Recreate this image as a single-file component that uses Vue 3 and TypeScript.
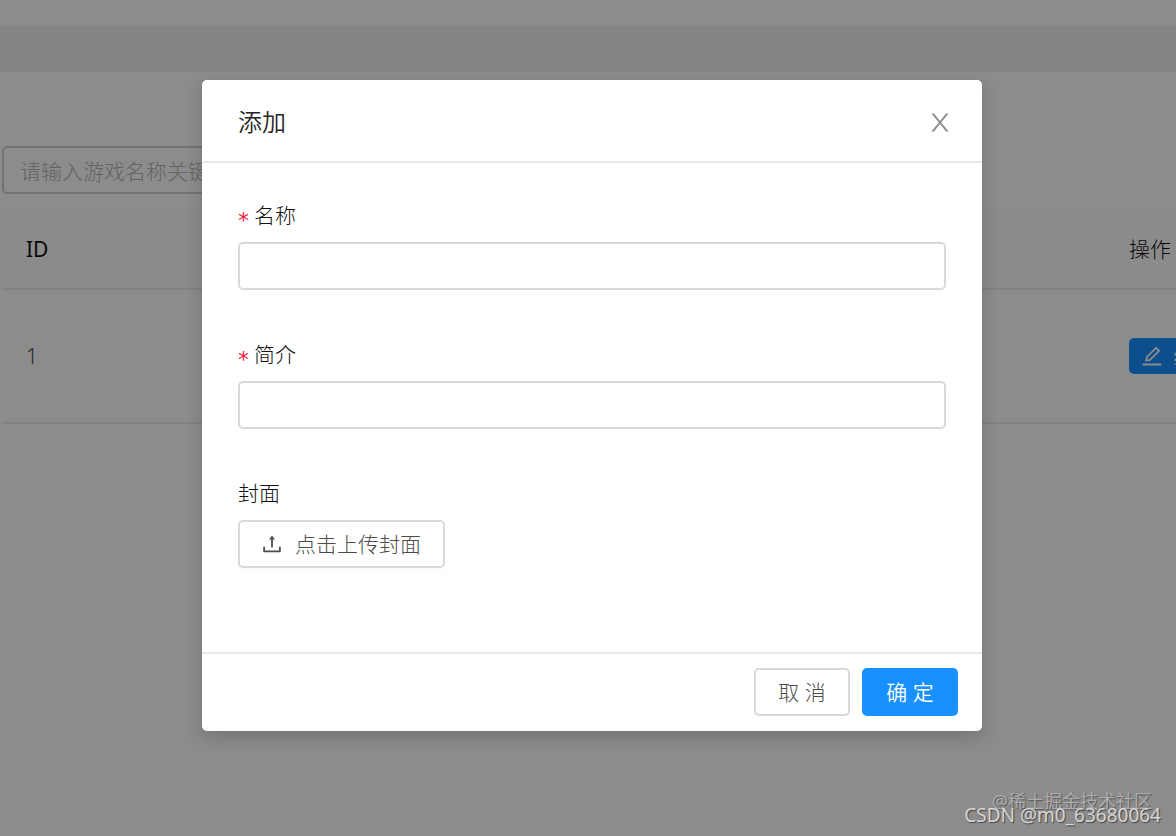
<script setup lang="ts">
import { ref } from 'vue'

interface Row {
  id: number
}

const keyword = ref('')
const name = ref('')
const intro = ref('')
const rows: Row[] = [{ id: 1 }]
</script>

<template>
  <div class="page">
    <div class="topbar"></div>
    <div class="band"></div>
    <main class="content">
      <input v-model="keyword" class="search" type="text" aria-label="游戏名称" placeholder="请输入游戏名称关键词" />
      <table class="table">
        <thead>
          <tr>
            <th>ID</th>
            <th class="actions">操作</th>
          </tr>
        </thead>
        <tbody>
          <tr v-for="row in rows" :key="row.id">
            <td>{{ row.id }}</td>
            <td class="actions">
              <button class="edit" type="button">
                <svg class="icon" viewBox="0 0 1024 1024" aria-hidden="true">
                  <path d="M257.7 752c2 0 4-.2 6-.5L431.9 722c2-.4 3.9-1.3 5.3-2.8l423.9-423.9a9.96 9.96 0 000-14.1L694.9 114.9c-1.9-1.9-4.4-2.9-7.1-2.9s-5.2 1-7.1 2.9L256.8 538.8c-1.5 1.5-2.4 3.3-2.8 5.3l-29.5 168.2a33.5 33.5 0 009.4 29.8c6.6 6.4 14.9 9.9 23.8 9.9zm67.4-174.4L687.8 215l73.3 73.3-362.7 362.6-88.9 15.7 15.6-89zM880 836H144c-17.7 0-32 14.3-32 32v36c0 4.4 3.6 8 8 8h784c4.4 0 8-3.6 8-8v-36c0-17.7-14.3-32-32-32z" />
                </svg>
                <span>编辑</span>
              </button>
            </td>
          </tr>
        </tbody>
      </table>
    </main>

    <div class="mask">
      <section class="modal" role="dialog" aria-modal="true" aria-labelledby="modal-title">
        <header class="modal-header">
          <h2 id="modal-title">添加</h2>
          <button class="close" type="button" aria-label="关闭">
            <svg class="icon" viewBox="0 0 24 24" aria-hidden="true">
              <path d="M3.4 3.5h2.6l6 7.4 6-7.4h2.600L13.200 12.500l7.400 9H18l-6-7.400-6 7.400H3.400l7.400-9z" />
            </svg>
          </button>
        </header>
        <form class="form" @submit.prevent>
          <div class="field">
            <label for="name"><span class="star">*</span>名称</label>
            <input id="name" v-model="name" type="text" required />
          </div>
          <div class="field">
            <label for="intro"><span class="star">*</span>简介</label>
            <input id="intro" v-model="intro" type="text" required />
          </div>
          <div class="field">
            <label for="cover">封面</label>
            <button id="cover" class="btn upload" type="button">
              <svg class="icon" viewBox="0 0 1024 1024" aria-hidden="true">
                <path d="M400 317.7h73.9V656c0 4.4 3.6 8 8 8h60c4.4 0 8-3.6 8-8V317.7H624c6.7 0 10.4-7.7 6.3-12.9L518.3 163a8 8 0 00-12.6 0l-112 141.7c-4.1 5.3-.4 13 6.3 13zM878 626h-60c-4.4 0-8 3.6-8 8v154H214V634c0-4.4-3.6-8-8-8h-60c-4.4 0-8 3.6-8 8v198c0 17.7 14.3 32 32 32h684c17.7 0 32-14.3 32-32V634c0-4.4-3.6-8-8-8z" />
              </svg>
              <span>点击上传封面</span>
            </button>
          </div>
        </form>
        <footer class="modal-footer">
          <button class="btn" type="button">取 消</button>
          <button class="btn primary" type="button">确 定</button>
        </footer>
      </section>
    </div>

    <div class="mark community">@稀土掘金技术社区</div>
    <div class="mark author">CSDN @m0_63680064</div>
  </div>
</template>

<style>
body {
  margin: 0;
}
</style>

<style scoped>
.page {
  position: relative;
  min-height: 100vh;
  overflow: hidden;
  background: #fff;
  color: #111;
  font-family: "Noto Sans", "Noto Sans CJK SC", sans-serif;
  font-size: 21px;
  font-weight: 300;
  line-height: 32px;
}
.page *,
.page {
  box-sizing: border-box;
}
button,
input {
  font: inherit;
  color: inherit;
}
button {
  cursor: pointer;
}
.icon {
  width: 24px;
  height: 24px;
  flex: none;
  fill: currentColor;
}
.topbar {
  height: 26px;
}
.band {
  height: 46px;
  background: #f0f2f5;
}
.content {
  padding: 74px 0 0 2px;
}
.search {
  display: block;
  width: 320px;
  height: 48px;
  padding: 2px 16px 0;
  border: 2px solid #d0d0d0;
  border-radius: 5px;
  background: #fff;
}
.search::placeholder {
  color: #b4b4b4;
  opacity: 1;
}
.table {
  width: calc(100% + 70px);
  margin-top: 16px;
  border-collapse: separate;
  border-spacing: 0;
  table-layout: fixed;
}
th,
td {
  padding: 0 24px;
  border-bottom: 2px solid #ebebeb;
  text-align: left;
}
th {
  height: 80px;
  background: #fdfdfd;
  font-weight: 400;
  color: #111;
}
td {
  height: 134px;
  color: #444;
}
.actions {
  width: 141px;
  white-space: nowrap;
}
th.actions {
  font-weight: 300;
}
.edit {
  display: flex;
  align-items: center;
  gap: 9px;
  height: 36px;
  padding: 0 11px;
  border: 0;
  border-radius: 5px;
  background: #1890ff;
  color: #fff;
}
.mask {
  position: absolute;
  inset: 0;
  display: flex;
  justify-content: center;
  align-items: flex-start;
  padding: 80px 0 0 8px;
  background: rgba(0, 0, 0, 0.45);
}
.modal {
  width: 780px;
  max-width: 100%;
  border-radius: 5px;
  background: #fff;
  box-shadow: 0 6px 18px rgba(0, 0, 0, 0.18);
}
.modal-header {
  display: flex;
  align-items: center;
  justify-content: space-between;
  padding: 25px 30px 23px 36px;
  border-bottom: 2px solid #e8e8e8;
}
h2 {
  margin: 0;
  font-size: 24px;
  font-weight: 350;
  line-height: 33px;
  color: #262626;
}
.close {
  display: flex;
  padding: 0;
  border: 0;
  background: none;
  color: #8c8c8c;
}
.form {
  display: flex;
  flex-direction: column;
  gap: 48px;
  padding: 36px 36px 84px;
}
.field {
  display: flex;
  flex-direction: column;
  align-items: flex-start;
  gap: 11px;
}
.field label {
  height: 32px;
}
.star {
  margin-right: 5px;
  color: #f0203c;
  font-family: "DejaVu Sans", sans-serif;
  font-size: 22px;
  font-weight: 400;
  line-height: 1;
  vertical-align: -5px;
}
.field input {
  width: 100%;
  height: 48px;
  padding: 0 16px;
  border: 2px solid #d9d9d9;
  border-radius: 5px;
  background: #fff;
}
.btn {
  min-width: 96px;
  height: 48px;
  padding: 0 22px;
  border: 2px solid #d9d9d9;
  border-radius: 5px;
  background: #fff;
  color: #4c4c4c;
  white-space: nowrap;
}
.upload {
  display: flex;
  align-items: center;
  gap: 11px;
  padding: 0 22px 0 20px;
  box-shadow: 0 3px 1px rgba(0, 0, 0, 0.02);
}
.primary {
  border-color: #1890ff;
  background: #1890ff;
  color: #fff;
  font-weight: 350;
}
.modal-footer {
  display: flex;
  justify-content: flex-end;
  gap: 12px;
  padding: 14px 24px 15px;
  border-top: 2px solid #e8e8e8;
}
.mark {
  position: absolute;
  font-size: 18px;
  font-weight: 400;
  line-height: 24px;
  white-space: nowrap;
}
.community {
  right: 24px;
  bottom: 23px;
  color: #adadad;
  text-shadow: 1px 1px 1px #555;
}
.author {
  right: 15px;
  bottom: 9px;
  color: #d6d6d6;
  font-size: 19px;
  text-shadow: 1px 1px 1px #444;
}
</style>
